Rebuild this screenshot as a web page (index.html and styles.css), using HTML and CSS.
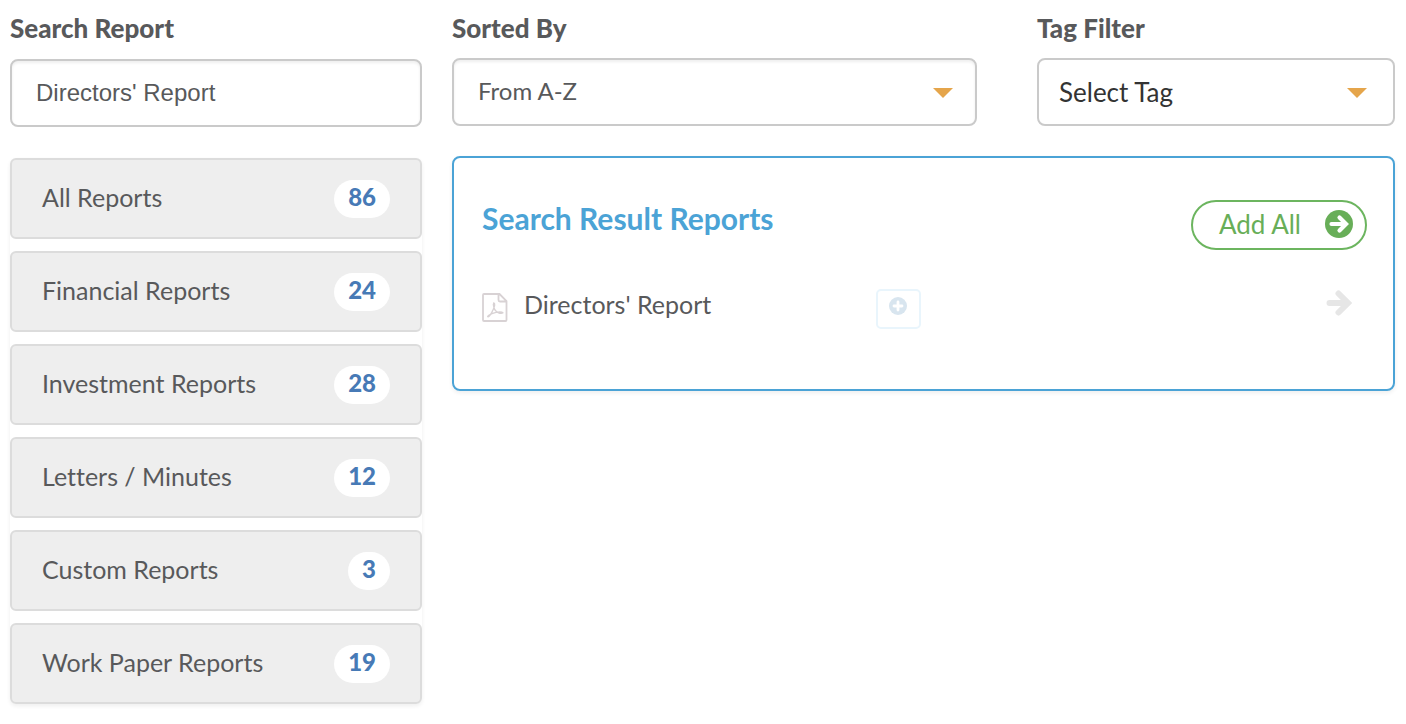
FILE: index.html
```html
<!DOCTYPE html>
<html lang="en">
<head>
<meta charset="utf-8">
<title>Reports</title>
<link rel="stylesheet" href="styles.css">
</head>
<body>
<div class="page">
  <aside class="sidebar">
    <div class="field">
      <label class="label" for="search">Search Report</label>
      <input class="control search" id="search" type="text" value="Directors' Report">
    </div>
    <nav class="categories" aria-label="Report categories">
      <a class="category" href="#">All Reports <span class="count">86</span></a>
      <a class="category" href="#">Financial Reports <span class="count">24</span></a>
      <a class="category" href="#">Investment Reports <span class="count">28</span></a>
      <a class="category" href="#">Letters / Minutes <span class="count">12</span></a>
      <a class="category" href="#">Custom Reports <span class="count">3</span></a>
      <a class="category" href="#">Work Paper Reports <span class="count">19</span></a>
    </nav>
  </aside>
  <main class="main">
    <div class="filters">
      <div class="field sort">
        <label class="label" for="sort">Sorted By</label>
        <div class="select">
          <select class="control" id="sort"><option>From A-Z</option></select>
          <svg class="caret" viewBox="0 0 20 10" aria-hidden="true"><path d="M0 0h20L10 10z"/></svg>
        </div>
      </div>
      <div class="field tag">
        <label class="label" for="tag">Tag Filter</label>
        <div class="select">
          <select class="control" id="tag"><option>Select Tag</option></select>
          <svg class="caret" viewBox="0 0 20 10" aria-hidden="true"><path d="M0 0h20L10 10z"/></svg>
        </div>
      </div>
    </div>
    <section class="results">
      <header class="results-head">
        <h2 class="title">Search Result Reports</h2>
        <button class="add-all" type="button">Add All
          <svg class="add-icon" viewBox="0 0 28 28" aria-hidden="true"><circle cx="14" cy="14" r="14" fill="#68ae58"/><path d="M6.500 14H20M14.500 7.500L21 14L14.500 20.500" fill="none" stroke="#fff" stroke-width="4.200" stroke-linecap="round"/></svg>
        </button>
      </header>
      <div class="result">
        <div class="report">
          <svg class="pdf" viewBox="0 0 26 29" aria-hidden="true"><path d="M2 1h15.500L24.500 8v19q0 1-1 1H2q-1 0-1-1V2q0-1 1-1zM16.500 1v6q0 1.500 1.500 1.500h6.500" fill="none" stroke="#d8d2d4" stroke-width="1.800"/><path d="M11.800 9.800q-1 1.200 0 4.200q1.200 4.600 5 6q3 .8 4.200-.2q-1.200-1.600-7-.5q-4.500 1-7.200 3q-1.800 1.500-.8 1.600q1.400-.2 3.800-4.500q2.600-5 2.900-7.200q.2-2-.9-2.400z" fill="none" stroke="#d8d2d4" stroke-width="1.300"/></svg>
          <span class="name">Directors' Report</span>
        </div>
        <button class="plus" type="button" aria-label="Preview tags">
          <svg class="plus-icon" viewBox="0 0 18 18" aria-hidden="true"><circle cx="9" cy="9" r="9" fill="#d8e5ef"/><path d="M9 5v8M5 9h8" stroke="#fff" stroke-width="2.800" stroke-linecap="round"/></svg>
        </button>
        <button class="move" type="button" aria-label="Add report">
          <svg class="move-icon" viewBox="0 0 26 28" aria-hidden="true"><path d="M3.500 14H20M12.500 4.500L22 14L12.500 23.500" fill="none" stroke="#e6e6e6" stroke-width="6" stroke-linecap="round"/></svg>
        </button>
      </div>
    </section>
  </main>
</div>
</body>
</html>
```
FILE: styles.css
```css
* {
  box-sizing: border-box;
}

body {
  margin: 0;
  background: #fff;
  color: #58595b;
  font-family: Lato, "Liberation Sans", sans-serif;
  font-size: 25px;
  font-variant-ligatures: none;
}

.page {
  display: grid;
  grid-template-columns: minmax(0, 412fr) minmax(0, 943fr);
  gap: 30px;
  padding: 10px 11px 10px 10px;
  align-items: start;
}

.sidebar,
.main {
  display: flex;
  flex-direction: column;
  gap: 30px;
}

.sidebar {
  gap: 31px;
}

.label {
  display: block;
  height: 49px;
  font-size: 26px;
  line-height: 36px;
  font-weight: 900;
}

.main .label {
  height: 48px;
}

.control {
  display: block;
  width: 100%;
  height: 68px;
  padding: 0 20px;
  border: 2px solid #cacaca;
  border-radius: 8px;
  background: #fff;
  color: #58595b;
  font: inherit;
  appearance: none;
}

.search {
  padding: 0 24px;
  font-family: "Liberation Sans", sans-serif;
  font-size: 24px;
  box-shadow: inset 0 2px 3px #0001;
}

.categories {
  display: flex;
  flex-direction: column;
  gap: 12px;
  border-radius: 6px;
  box-shadow: 0 2px 4px #0001;
}

.category {
  display: flex;
  justify-content: space-between;
  align-items: flex-start;
  height: 81px;
  padding: 20px 30px 0;
  border: 2px solid #dcdcdc;
  border-radius: 6px;
  background: #eee;
  color: inherit;
  line-height: 34px;
  text-decoration: none;
}

.count {
  height: 38px;
  padding: 0 14px;
  border-radius: 19px;
  background: #fff;
  color: #477ab6;
  font-size: 24px;
  line-height: 34px;
  font-weight: 900;
}

.filters {
  display: flex;
  gap: 60px;
}

.sort {
  flex: 525 1 0;
}

.tag {
  flex: 358 1 0;
}

.select {
  position: relative;
}

.sort .control {
  padding: 0 24px 4px;
  font-size: 24px;
  box-shadow: inset 0 2px 3px #0001;
}

.tag .control {
  color: #333;
  font-size: 26px;
}

.caret {
  position: absolute;
  top: 30px;
  right: 24px;
  width: 20px;
  height: 10px;
  fill: #e5a54b;
  pointer-events: none;
}

.tag .caret {
  right: 28px;
}

.results {
  padding: 42px 26px 60px 28px;
  border: 2px solid #4ba3d6;
  border-radius: 8px;
  box-shadow: 0 2px 4px #0001;
}

.results-head {
  display: flex;
  justify-content: space-between;
}

.title {
  margin: 0;
  color: #4ba3d6;
  font-size: 30px;
  line-height: 36px;
  font-weight: 700;
}

.add-all {
  display: flex;
  align-items: center;
  gap: 24px;
  height: 50px;
  padding: 0 12px 3px 26px;
  border: 2px solid #6cb55f;
  border-radius: 25px;
  background: #fff;
  color: #68ae58;
  font: inherit;
  font-size: 26px;
}

.add-icon {
  width: 28px;
  height: 28px;
}

.result {
  display: flex;
  align-items: flex-start;
  margin-top: 39px;
}

.report {
  display: flex;
  align-items: flex-start;
  gap: 16px;
  width: 44.5%;
}

.pdf {
  width: 26px;
  height: 29px;
  margin-top: 4px;
}

.name {
  line-height: 30px;
}

.plus {
  width: 45px;
  height: 40px;
  padding: 0 0 6px;
  border: 2px solid #e9f5fc;
  border-radius: 5px;
  background: #fff;
}

.plus-icon {
  display: block;
  width: 18px;
  height: 18px;
  margin: 0 auto;
}

.move {
  margin-left: auto;
  padding: 0 15px 0 0;
  border: 0;
  background: none;
}

.move-icon {
  display: block;
  width: 26px;
  height: 28px;
}
```
